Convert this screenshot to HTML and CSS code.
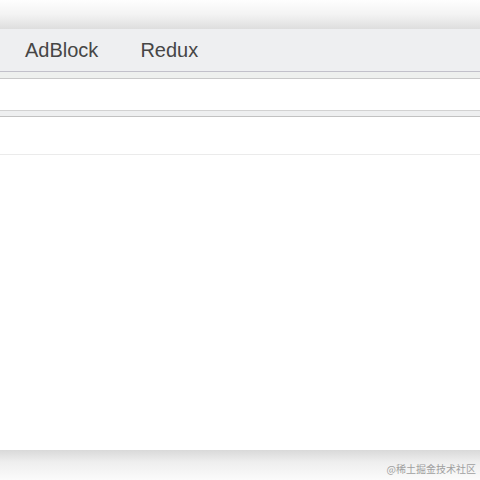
FILE: index.html
```html
<!DOCTYPE html>
<html lang="en">
<head>
    <meta charset="UTF-8">
    <meta name="viewport" content="width=device-width, initial-scale=1.0">
    <title>Tabs</title>
    <link rel="stylesheet" href="styles.css">
</head>
<body>
    <div class="page">
        <div class="top-shade"></div>
        <div class="tab-bar">
            <span class="tab">AdBlock</span>
            <span class="tab">Redux</span>
        </div>
        <div class="strip"></div>
        <div class="row"></div>
        <div class="strip strip-mid"></div>
        <div class="row row-tall"></div>
        <div class="content"></div>
        <div class="bottom-shade">
            <span class="watermark">@稀土掘金技术社区</span>
        </div>
    </div>
</body>
</html>
```

FILE: styles.css
```css
* {
    box-sizing: border-box;
    margin: 0;
    padding: 0;
}

body {
    font-family: "Liberation Sans", Arial, sans-serif;
    background: #fff;
    overflow: hidden;
}

.page {
    display: flex;
    flex-direction: column;
    height: 480px;
}

.top-shade {
    height: 29px;
    background: linear-gradient(#fefefe, #f3f3f3 50%, #dedede);
}

.tab-bar {
    height: 43px;
    background-color: #eeeff1;
    border-bottom: 1px solid #c2c1ca;
    display: flex;
    align-items: center;
    gap: 42px;
    padding-left: 25px;
    padding-top: 1px;
}

.tab {
    font-size: 20px;
    color: #464646;
}

.strip {
    height: 7px;
    background-color: #eef0ee;
    border-bottom: 1px solid #c9c9c9;
}

.strip-mid {
    background-color: #eeeff0;
    border-top: 1px solid #d2d2d2;
    height: 7px;
    border-bottom: 1px solid #c2c2c2;
}

.row {
    height: 31px;
}

.row-tall {
    height: 38px;
    border-bottom: 1px solid #ebebeb;
}

.content {
    flex: 1;
}

.bottom-shade {
    height: 30px;
    background: linear-gradient(#d9d9d9, #eeeeee 40%, #fbfbfb);
    display: flex;
    justify-content: flex-end;
    align-items: center;
    padding-right: 4px;
    padding-top: 6px;
}

.watermark {
    font-family: "Noto Sans CJK SC", sans-serif;
    font-size: 10px;
    color: #a0a0a0;
}
```
